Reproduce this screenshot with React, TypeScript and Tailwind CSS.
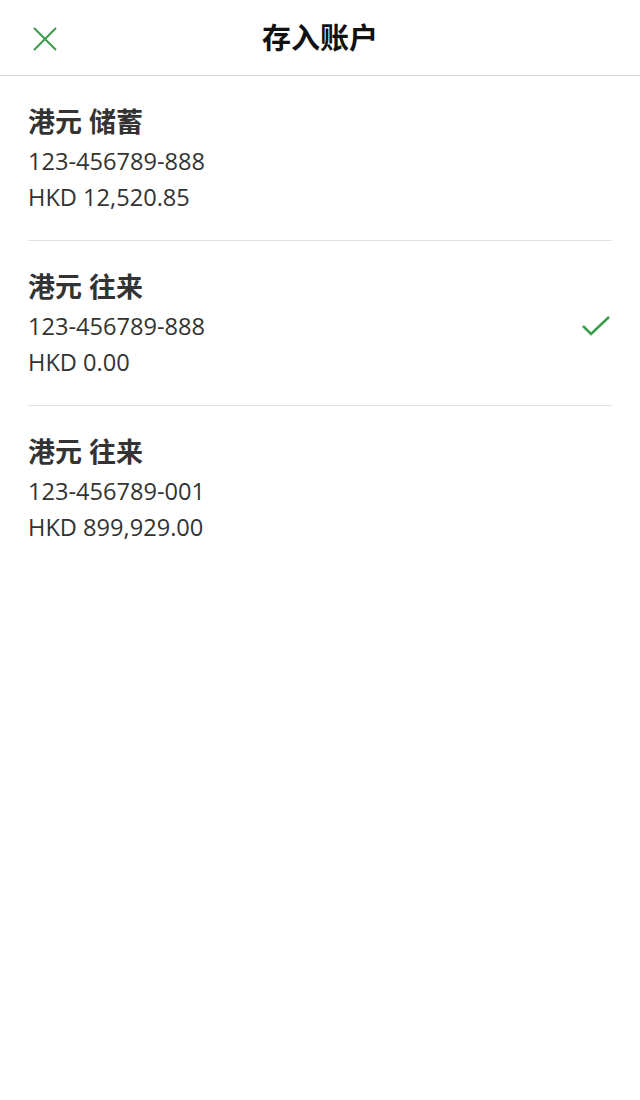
const accounts = [
  { name: "港元 储蓄", number: "123-456789-888", balance: "HKD 12,520.85", selected: false },
  { name: "港元 往来", number: "123-456789-888", balance: "HKD 0.00", selected: true },
  { name: "港元 往来", number: "123-456789-001", balance: "HKD 899,929.00", selected: false },
];

const font = { fontFamily: '"Open Sans", "Noto Sans CJK SC", sans-serif' };

export default function App() {
  return (
    <div className="min-h-[1100px] w-[640px] bg-white" style={font}>
      <header className="relative flex h-[76px] items-center justify-center border-b border-[#d6d6d6]">
        <button className="absolute left-[30px] top-[24px] p-[3px]">
          <svg width="24" height="24" viewBox="0 0 24 24" fill="none" stroke="#3a9c4b" strokeWidth="2">
            <path d="M1 1 L23 23 M23 1 L1 23" />
          </svg>
        </button>
        <h1 className="text-[29px] font-bold text-[#111]">存入账户</h1>
      </header>

      <ul className="px-[28px]">
        {accounts.map((a, i) => (
          <li
            key={i}
            className={`flex items-center justify-between pt-[25px] pb-[25px] ${
              i < accounts.length - 1 ? "border-b border-[#e2e2e2]" : ""
            }`}
          >
            <div className="text-[#333]">
              <div className="text-[27px] font-bold leading-[42px]">{a.name}</div>
              <div className="text-[23.6px] leading-[36px]">{a.number}</div>
              <div className="text-[23.6px] leading-[36px]">{a.balance}</div>
            </div>
            {a.selected && (
              <svg width="30" height="24" viewBox="0 0 30 24" fill="none" stroke="#3a9c4b" strokeWidth="2.5" className="mr-[1px] mt-[6px]">
                <path d="M2 12 L10 20 L28 3" />
              </svg>
            )}
          </li>
        ))}
      </ul>
    </div>
  );
}
